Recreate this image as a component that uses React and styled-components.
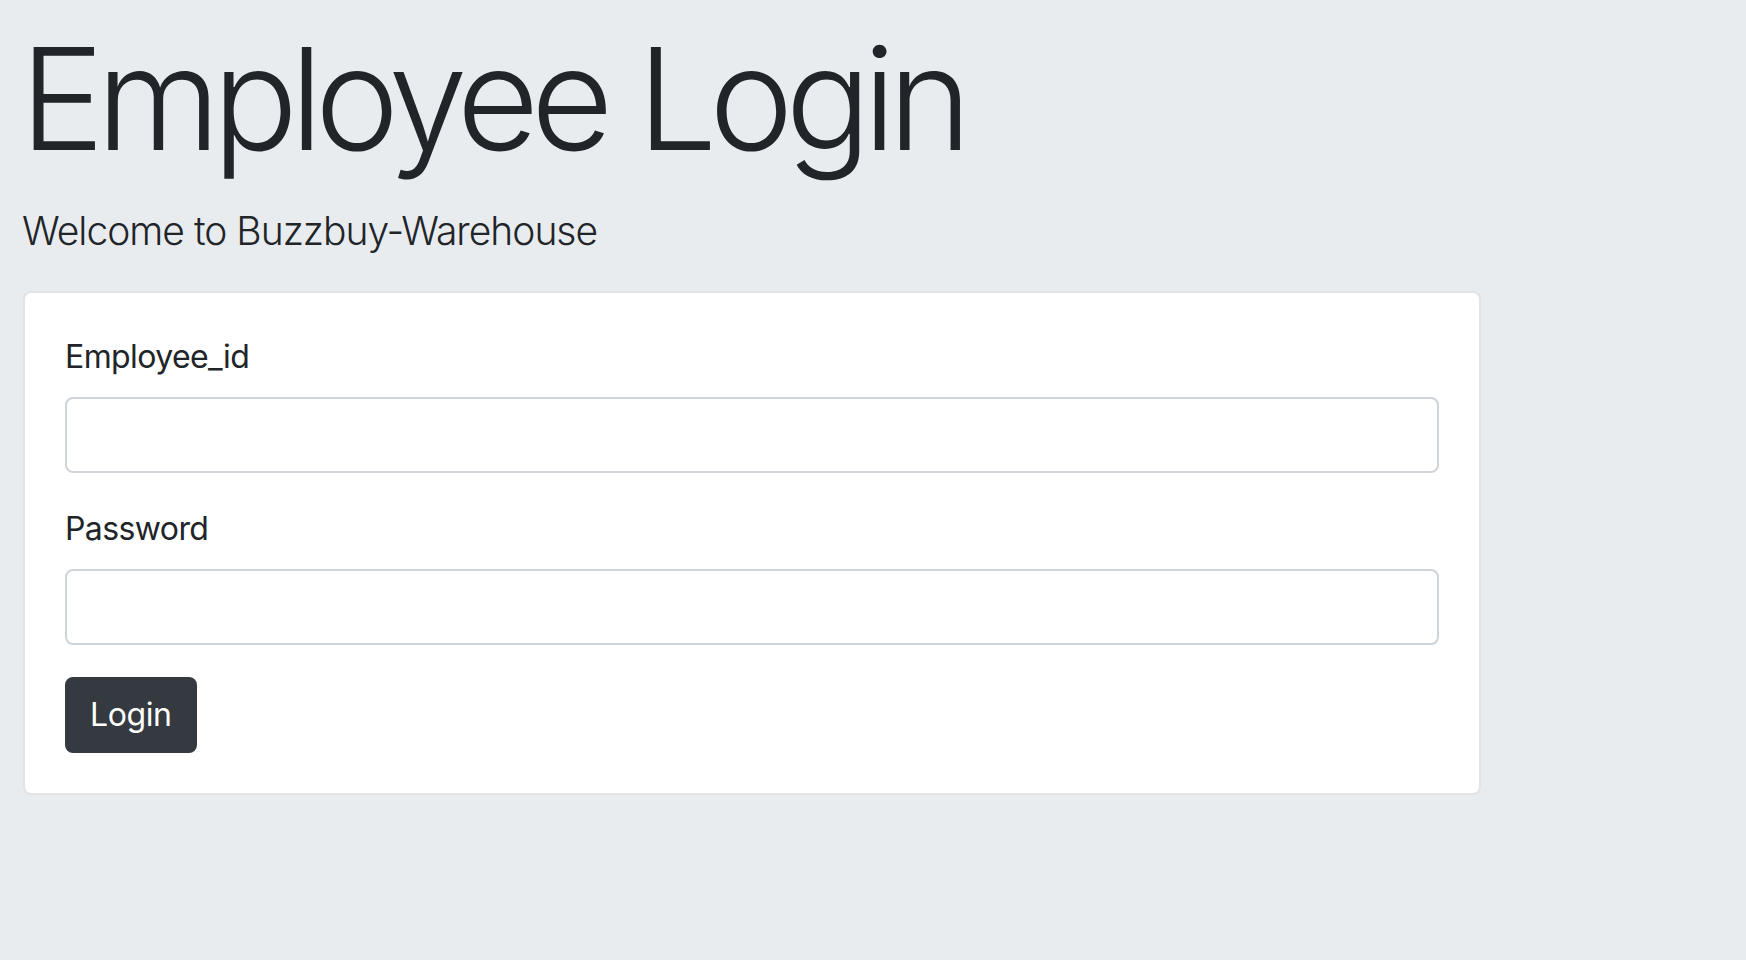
import React, { useState } from 'react'
import styled, { createGlobalStyle } from 'styled-components'

const GlobalStyle = createGlobalStyle`
  html, body {
    margin: 0;
    background-color: #e9ecef;
  }
  body {
    font-family: Inter, 'Liberation Sans', sans-serif;
    color: #212529;
  }
  * {
    box-sizing: border-box;
  }
`

const Page = styled.div`
  min-height: 100vh;
  padding: 13px 22px 40px 20px;
`

const Title = styled.h1`
  margin: 0 0 19px 0;
  font-size: 142px;
  font-weight: 300;
  line-height: 1.2;
  letter-spacing: -8px;
`

const Lead = styled.p`
  margin: 0 0 30px 2px;
  font-size: 39px;
  font-weight: 300;
  line-height: 1.5;
  letter-spacing: -1px;
`

const Card = styled.div`
  width: 1458px;
  margin-left: 3px;
  background-color: #ffffff;
  border: 2px solid rgba(0, 0, 0, 0.11);
  border-radius: 8px;
  padding: 40px;
`

const FormGroup = styled.div`
  margin-bottom: 32px;
`

const Label = styled.label`
  display: block;
  margin-bottom: 16px;
  font-size: 32px;
  line-height: 1.5;
  letter-spacing: -0.6px;
`

const Input = styled.input`
  display: block;
  width: 100%;
  height: 76px;
  padding: 12px 24px;
  font-family: inherit;
  font-size: 32px;
  color: #495057;
  background-color: #ffffff;
  border: 2px solid #ced4da;
  border-radius: 8px;
  outline: none;
`

const Button = styled.button`
  display: inline-block;
  padding: 12px 23px;
  font-family: inherit;
  font-size: 32px;
  line-height: 1.5;
  letter-spacing: -0.4px;
  color: #ffffff;
  background-color: #343a40;
  border: 2px solid #343a40;
  border-radius: 8px;
  cursor: pointer;
`

function App() {
  const [employeeId, setEmployeeId] = useState('')
  const [password, setPassword] = useState('')

  const handleSubmit = (e) => {
    e.preventDefault()
  }

  return (
    <>
      <GlobalStyle />
      <Page>
        <Title>Employee Login</Title>
        <Lead>Welcome to Buzzbuy-Warehouse</Lead>
        <Card>
          <form onSubmit={handleSubmit}>
            <FormGroup>
              <Label htmlFor="employee_id">Employee_id</Label>
              <Input
                id="employee_id"
                type="text"
                value={employeeId}
                onChange={(e) => setEmployeeId(e.target.value)}
              />
            </FormGroup>
            <FormGroup>
              <Label htmlFor="password">Password</Label>
              <Input
                id="password"
                type="password"
                value={password}
                onChange={(e) => setPassword(e.target.value)}
              />
            </FormGroup>
            <Button type="submit">Login</Button>
          </form>
        </Card>
      </Page>
    </>
  )
}

export default App
